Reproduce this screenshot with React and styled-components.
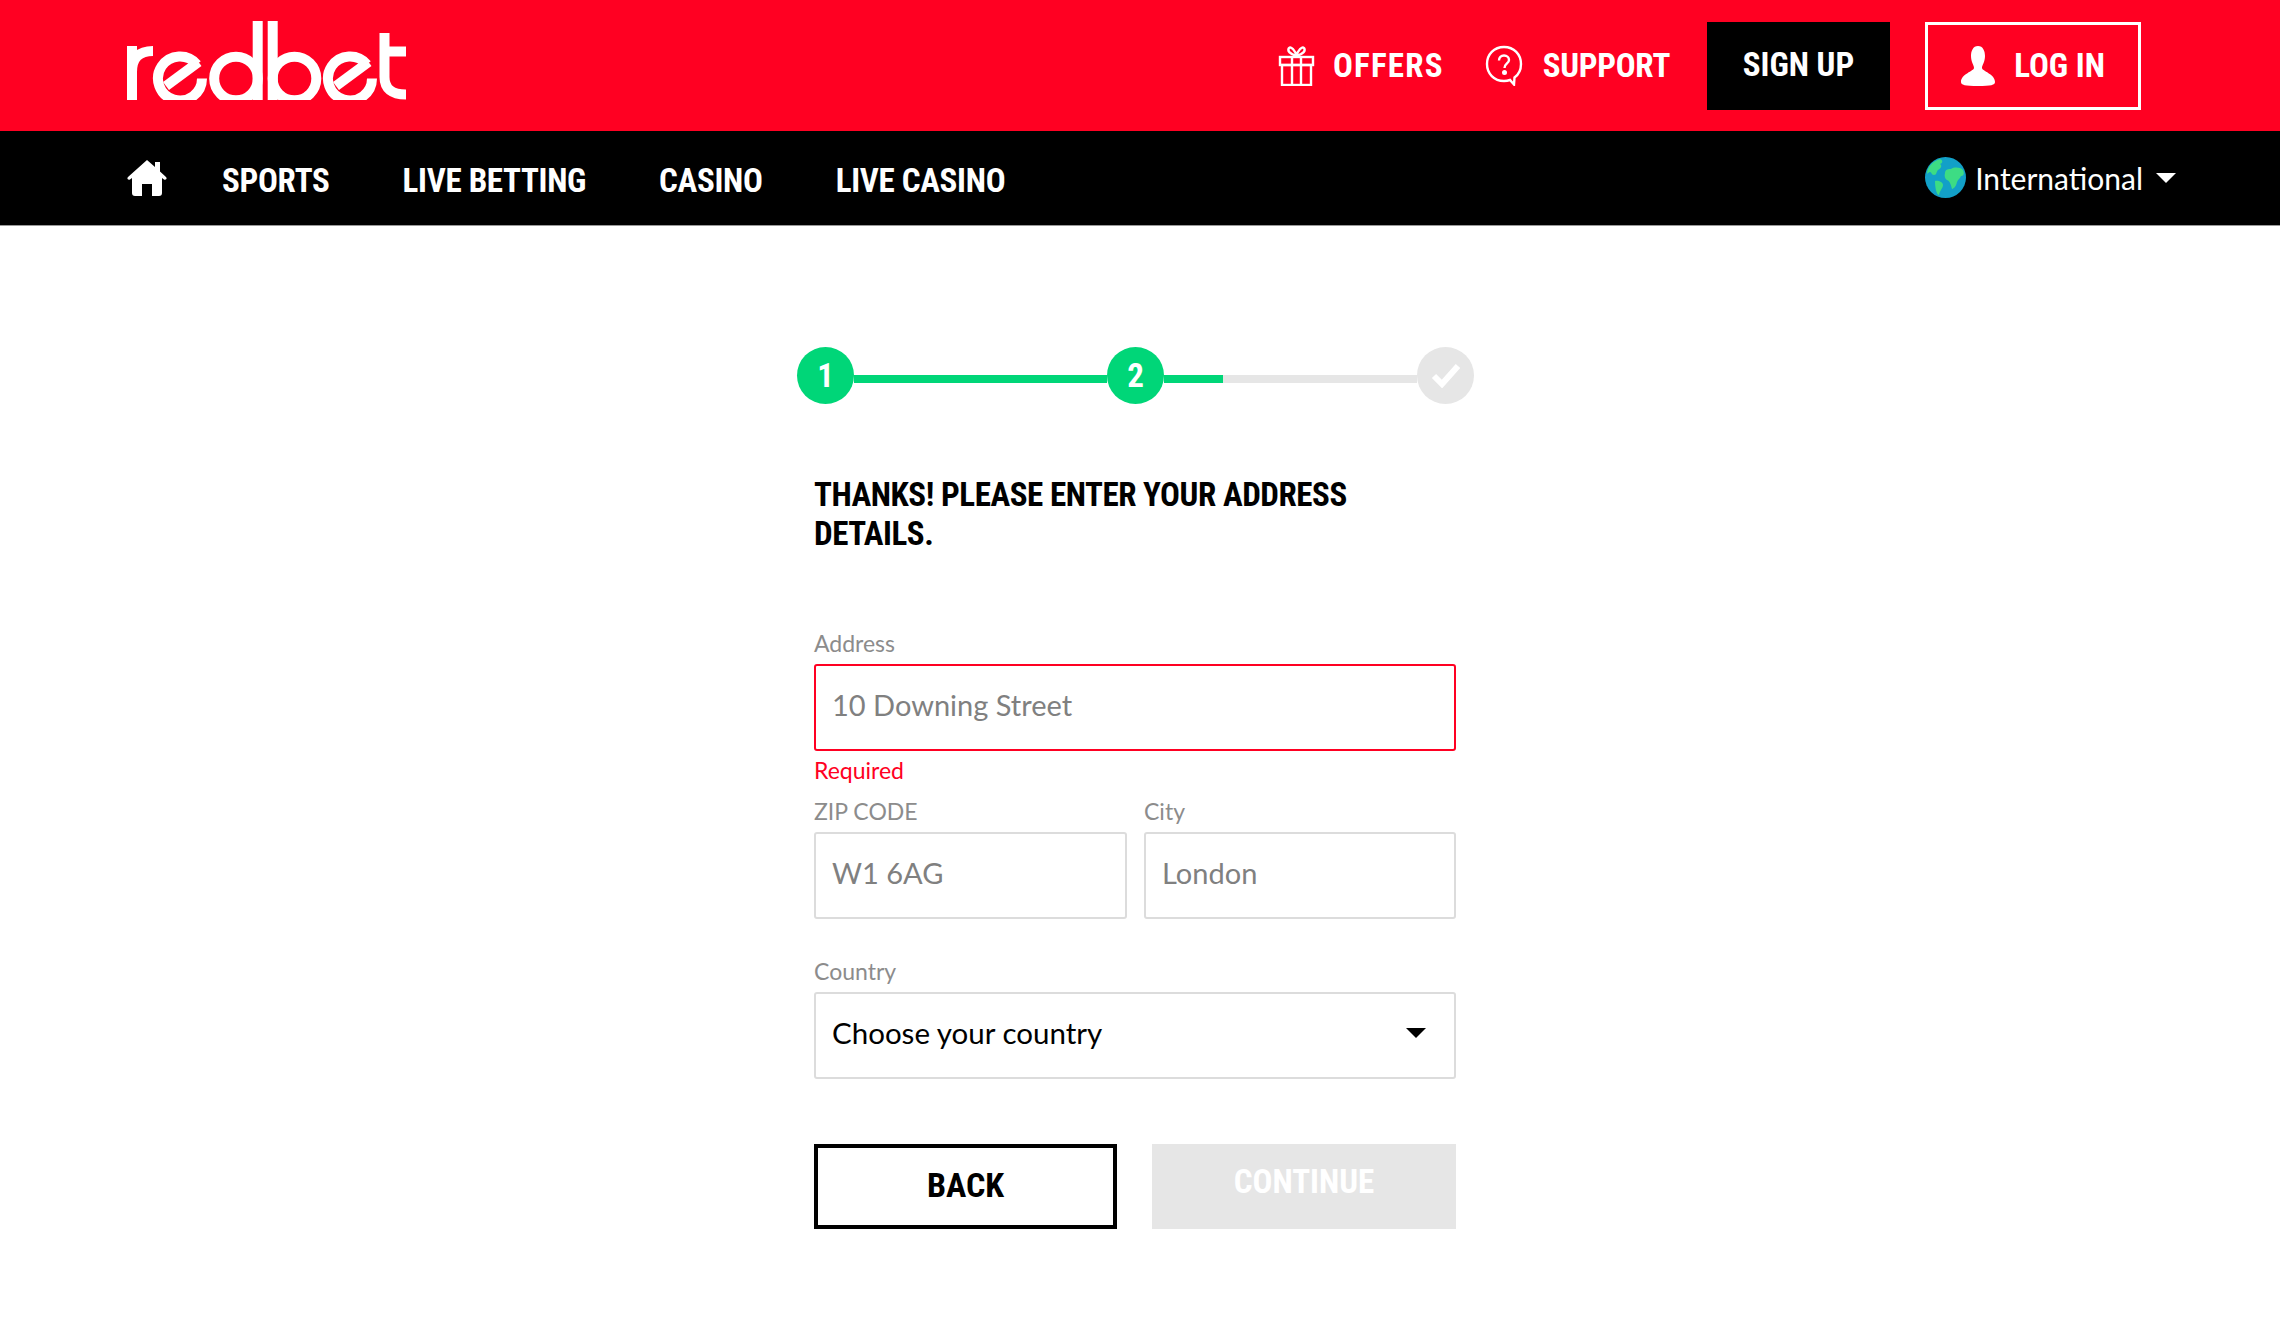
import React from "react";
import styled, { createGlobalStyle } from "styled-components";

const condensed = `"Roboto Condensed", "Liberation Sans", sans-serif`;
const body = `Lato, "Open Sans", sans-serif`;

const GlobalStyle = createGlobalStyle`
  html, body {
    margin: 0;
    padding: 0;
    background: #ffffff;
    font-family: ${body};
  }
  * { box-sizing: border-box; }
`;

const TopBar = styled.header`
  display: flex;
  align-items: center;
  justify-content: space-between;
  height: 131px;
  padding: 0 139px 0 127px;
  background: #ff0022;
  color: #ffffff;
`;

const LogoBox = styled.a`
  display: flex;
  margin-bottom: 11px;
`;

const TopActions = styled.div`
  display: flex;
  align-items: center;
`;

const TopLink = styled.a`
  display: flex;
  align-items: center;
  gap: ${props => props.$gap}px;
  margin-right: ${props => props.$spacing}px;
  font-family: ${condensed};
  font-size: 33px;
  font-weight: 700;
  letter-spacing: ${props => props.$tracking}px;
  line-height: 40px;
`;

const SignUp = styled.button`
  width: 183px;
  height: 88px;
  margin-right: 35px;
  padding-bottom: 3px;
  border: 0;
  background: #000000;
  color: #ffffff;
  font-family: ${condensed};
  font-size: 33px;
  font-weight: 700;
`;

const LogIn = styled.button`
  display: flex;
  align-items: center;
  justify-content: center;
  gap: 19px;
  width: 216px;
  height: 88px;
  border: 3px solid #ffffff;
  background: transparent;
  color: #ffffff;
  font-family: ${condensed};
  font-size: 33px;
  font-weight: 700;
`;

const NavBar = styled.nav`
  display: flex;
  align-items: center;
  justify-content: space-between;
  height: 95px;
  padding: 0 104px 1px 127px;
  border-bottom: 1px solid #999999;
  background: #000000;
  color: #ffffff;
`;

const NavList = styled.div`
  display: flex;
  align-items: center;
  gap: 73px;
`;

const HomeLink = styled.a`
  display: flex;
  margin-right: -18px;
`;

const NavItem = styled.a`
  padding-top: 7px;
  font-family: ${condensed};
  font-size: 33px;
  font-weight: 700;
  letter-spacing: -0.3px;
  line-height: 40px;
`;

const Region = styled.div`
  display: flex;
  align-items: center;
  font-size: 30px;
  line-height: 40px;
`;

const RegionName = styled.span`
  margin: 0 13px 0 9px;
`;

const Caret = styled.span`
  width: 0;
  height: 0;
  border-left: 10px solid transparent;
  border-right: 10px solid transparent;
  border-top: 10px solid ${props => props.$color};
`;

const Main = styled.main`
  display: flex;
  justify-content: center;
  padding: 121px 9px 97px 0;
`;

const Column = styled.div`
  width: 677px;
`;

const Stepper = styled.div`
  display: flex;
  align-items: center;
  height: 57px;
`;

const StepCircle = styled.div`
  display: flex;
  align-items: center;
  justify-content: center;
  flex: none;
  width: 57px;
  height: 57px;
  border-radius: 50%;
  background: ${props => (props.$active ? "#00d678" : "#e6e6e6")};
  color: #ffffff;
  font-family: ${condensed};
  font-size: 33px;
  font-weight: 700;
`;

const StepLine = styled.div`
  flex: 1;
  height: 8px;
  margin-top: 7px;
  background: #e6e6e6;
`;

const StepProgress = styled.div`
  width: ${props => props.$percent}%;
  height: 100%;
  background: #00d678;
`;

const Form = styled.form`
  padding: 0 18px 0 17px;
`;

const Title = styled.h1`
  width: 560px;
  margin: 71px 0 78px;
  color: #000000;
  font-family: ${condensed};
  font-size: 33px;
  font-weight: 700;
  letter-spacing: -0.45px;
  line-height: 39px;
`;

const Label = styled.label`
  display: block;
  height: 24px;
  margin-bottom: 9px;
  color: #8c8c8c;
  font-size: 23px;
  line-height: 24px;
`;

const Input = styled.input`
  display: block;
  width: 100%;
  height: 87px;
  padding: 0 16px 6px;
  border: 2px solid ${props => (props.$invalid ? "#ff0022" : "#dcdcdc")};
  border-radius: 3px;
  outline: 0;
  background: #ffffff;
  font-family: ${body};
  font-size: 29px;

  &::placeholder {
    color: #808080;
    opacity: 1;
  }
`;

const ErrorText = styled.div`
  height: 48px;
  padding-top: 6px;
  color: #ff0022;
  font-size: 23px;
  line-height: 26px;
`;

const FieldRow = styled.div`
  display: grid;
  grid-template-columns: 313px 312px;
  gap: 17px;
  margin-bottom: 40px;
`;

const Select = styled.div`
  display: flex;
  align-items: center;
  justify-content: space-between;
  height: 87px;
  padding: 0 28px 6px 16px;
  border: 2px solid #dcdcdc;
  border-radius: 3px;
  color: #000000;
  font-size: 29.5px;
`;

const Buttons = styled.div`
  display: grid;
  grid-template-columns: 303px 304px;
  gap: 35px;
  margin-top: 65px;
`;

const BackButton = styled.button`
  height: 85px;
  padding-bottom: 4px;
  border: 4px solid #000000;
  background: #ffffff;
  color: #000000;
  font-family: ${condensed};
  font-size: 34px;
  font-weight: 700;
`;

const ContinueButton = styled.button`
  height: 85px;
  padding-bottom: 12px;
  border: 0;
  background: #e6e6e6;
  color: #ffffff;
  font-family: ${condensed};
  font-size: 33px;
  font-weight: 700;
`;

const LogoE = ({ x }) => (
  <g transform={`translate(${x} 0)`}>
    <path d="M16.9 44.4 A22 22 0 1 0 22 58.5" />
    <path d="M18.500 42 L-14 66" />
  </g>
);

const Logo = () => (
  <svg width="280" height="80" viewBox="0 0 280 80" fill="none" stroke="#ffffff" strokeWidth="10">
    <path d="M5 26 V80" />
    <path d="M5 52 Q5 31 26 31" />
    <LogoE x={53} />
    <circle cx="109" cy="58.5" r="21.8" />
    <path d="M130.7 1 V80" />
    <path d="M145.7 1 V80" />
    <circle cx="167.5" cy="58.5" r="21.8" />
    <LogoE x={223} />
    <path d="M257.5 13 V57 Q257.5 74.5 279 74.5" />
    <path d="M257.5 31.5 H279" />
  </svg>
);

const GiftIcon = () => (
  <svg width="37" height="40" viewBox="0 0 37 40" fill="none" stroke="#ffffff" strokeWidth="2.4">
    <rect x="2" y="11" width="33" height="8" />
    <rect x="4" y="19" width="29" height="20" />
    <path d="M14 11 V39 M23 11 V39" />
    <path d="M18.5 10 C12 8 9 5 11 2 C13 0 17 4 18.5 10 C20 4 24 0 26 2 C28 5 25 8 18.5 10 Z" />
  </svg>
);

const SupportIcon = () => (
  <svg width="38" height="41" viewBox="0 0 38 41" fill="none" stroke="#ffffff" strokeWidth="2.4">
    <path d="M19 2 C9 2 2 9.500 2 19 C2 28.500 9 36 19 36 C21 36 23 35.700 25 35 L29 39.500 L29.500 32.500 C33.800 29.500 36 24.500 36 19 C36 9.500 29 2 19 2 Z" />
    <path d="M14 15.500 C14 12.500 16 10.500 19 10.500 C22 10.500 24 12.500 24 15 C24 18.500 19.500 18.500 19.500 23" />
    <circle cx="19.500" cy="27.500" r="1.300" fill="#ffffff" />
  </svg>
);

const UserIcon = () => (
  <svg width="34" height="40" viewBox="0 0 34 40" fill="#ffffff">
    <path d="M17 0 C22 0 24 5 24 10 C24 16 21 19 21 22 C21 25 34 28 34 36 C34 39 30 40 17 40 C4 40 0 39 0 36 C0 28 13 25 13 22 C13 19 10 16 10 10 C10 5 12 0 17 0 Z" />
  </svg>
);

const HomeIcon = () => (
  <svg width="40" height="36" viewBox="0 0 40 36" fill="#ffffff">
    <path d="M20 0 L28 7 V2 H33 V11.500 L39 17 C40.500 18.500 39 20.500 37 19.500 L35 18 V33 C35 35 34 36 32 36 H25 V24 H15 V36 H8 C6 36 5 35 5 33 V18 L3 19.500 C1 20.500 -0.500 18.500 1 17 Z" />
  </svg>
);

const GlobeIcon = () => (
  <svg width="41" height="41" viewBox="0 0 41 41">
    <circle cx="20.500" cy="20.500" r="20.500" fill="#12a0c8" />
    <path d="M2 17 C2 10 8 4 15 2 C18 3 18 6 15 7 C18 9 15 12 13 13 C11 15 12 18 9 18 C6 18 7 15 5 15 C4 15 3 16 2 17 Z" fill="#3ddc84" />
    <path d="M10 24 C13 23 18 25 18 28 C18 31 15 33 14 38 C12 38 10 32 10 24 Z" fill="#3ddc84" />
    <path d="M20 16 C20 12 24 12 26 12 C29 10 35 10 38 13 C40 17 38 19 36 19 C35 22 33 22 32 25 C31 30 28 32 27 32 C26 28 25 24 22 23 C20 22 19 19 20 16 Z" fill="#3ddc84" />
  </svg>
);

const CheckIcon = () => (
  <svg width="30" height="24" viewBox="0 0 30 24" fill="none" stroke="#ffffff" strokeWidth="6">
    <path d="M3 12 L11 20 L27 2" />
  </svg>
);

const App = () => {
  return (
    <>
      <GlobalStyle />
      <TopBar>
        <LogoBox>
          <Logo />
        </LogoBox>
        <TopActions>
          <TopLink $spacing={41} $gap={18} $tracking={1.2}>
            <GiftIcon />
            OFFERS
          </TopLink>
          <TopLink $spacing={37} $gap={20} $tracking={-0.3}>
            <SupportIcon />
            SUPPORT
          </TopLink>
          <SignUp>SIGN UP</SignUp>
          <LogIn>
            <UserIcon />
            LOG IN
          </LogIn>
        </TopActions>
      </TopBar>
      <NavBar>
        <NavList>
          <HomeLink>
            <HomeIcon />
          </HomeLink>
          <NavItem>SPORTS</NavItem>
          <NavItem>LIVE BETTING</NavItem>
          <NavItem>CASINO</NavItem>
          <NavItem>LIVE CASINO</NavItem>
        </NavList>
        <Region>
          <GlobeIcon />
          <RegionName>International</RegionName>
          <Caret $color="#ffffff" />
        </Region>
      </NavBar>
      <Main>
        <Column>
          <Stepper>
            <StepCircle $active>1</StepCircle>
            <StepLine>
              <StepProgress $percent={100} />
            </StepLine>
            <StepCircle $active>2</StepCircle>
            <StepLine>
              <StepProgress $percent={23.5} />
            </StepLine>
            <StepCircle>
              <CheckIcon />
            </StepCircle>
          </Stepper>
          <Form>
            <Title>THANKS! PLEASE ENTER YOUR ADDRESS DETAILS.</Title>
            <Label>Address</Label>
            <Input $invalid placeholder="10 Downing Street" />
            <ErrorText>Required</ErrorText>
            <FieldRow>
              <div>
                <Label>ZIP CODE</Label>
                <Input placeholder="W1 6AG" />
              </div>
              <div>
                <Label>City</Label>
                <Input placeholder="London" />
              </div>
            </FieldRow>
            <Label>Country</Label>
            <Select>
              Choose your country
              <Caret $color="#000000" />
            </Select>
            <Buttons>
              <BackButton type="button">BACK</BackButton>
              <ContinueButton type="button" disabled>CONTINUE</ContinueButton>
            </Buttons>
          </Form>
        </Column>
      </Main>
    </>
  );
};

export default App;
